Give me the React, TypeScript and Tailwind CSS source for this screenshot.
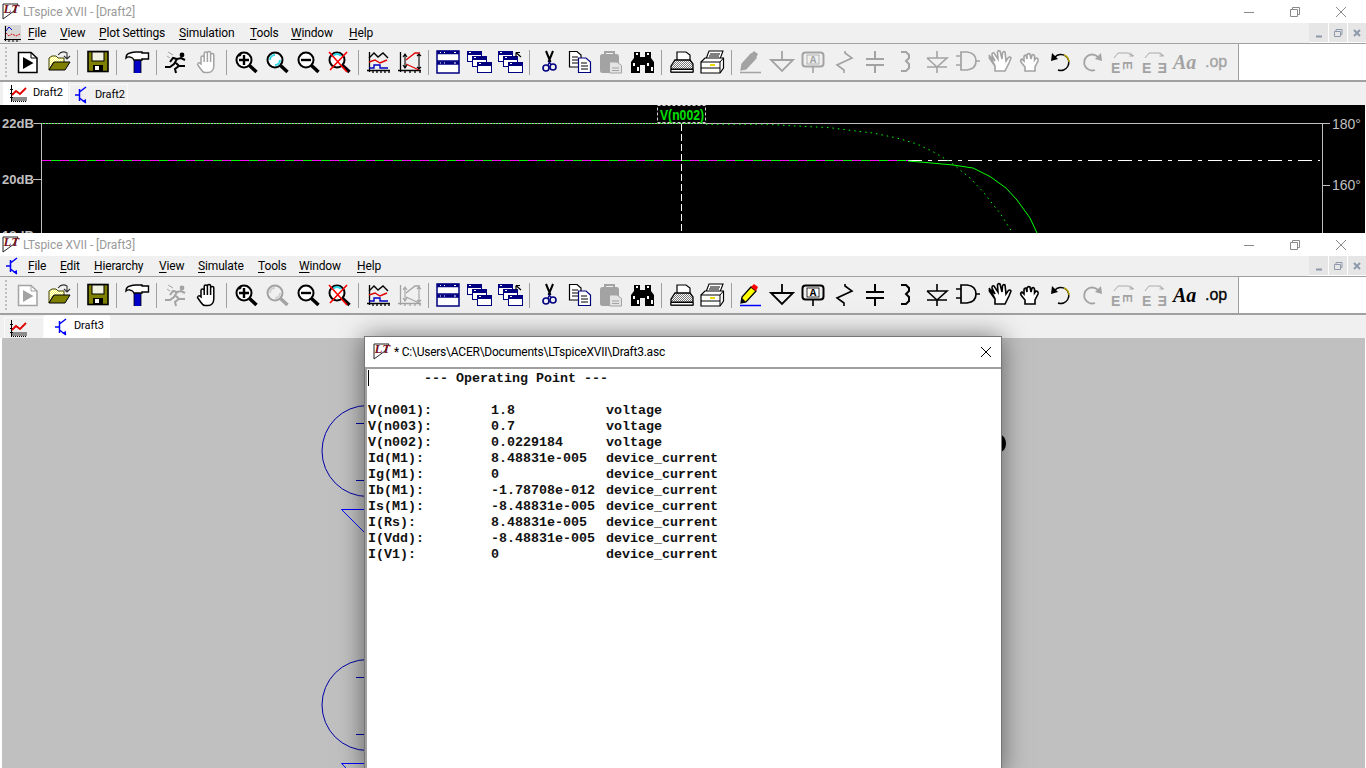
import React from "react";

type IP = { d?: boolean };
const Svg = ({ children }: { children: React.ReactNode }) => (
  <svg width="24" height="24" viewBox="0 0 24 24" fill="none" className="block overflow-visible">{children}</svg>
);
const G = "#a3a3a3";
const col = (d: boolean | undefined, c = "#000") => (d ? G : c);

const Mag = ({ d, kind }: IP & { kind?: string }) => (
  <Svg>
    <circle cx="10" cy="10" r="7.5" fill={d ? "#f0f0f0" : "#fff"} stroke={col(d)} strokeWidth="2" />
    {!kind && <path d="M5 10A5 5 0 0 1 10 5M15 10A5 5 0 0 1 10 15" stroke={d ? "#d0d0d0" : "#30d8e8"} strokeWidth="2" />}
    {kind === "x" && <path d="M6 6A5 5 0 0 1 14 6" stroke="#30d8e8" strokeWidth="2" />}
    {kind === "+" && <path d="M5 10H15M10 5V15M5 6L7 4" stroke={col(d)} strokeWidth="2.4" />}
    {kind === "-" && <path d="M5 10H15" stroke={col(d)} strokeWidth="2.4" />}
    <path d="M15.5 15.5L22.5 22" stroke={col(d)} strokeWidth="3.5" />
    {kind === "x" && <path d="M2 2L20 22M20 2L3 20" stroke="#ff0000" strokeWidth="1.6" />}
  </Svg>
);

const Hand = ({ d }: IP) => (
  <Svg>
    <path d="M6 14V7.5a1.6 1.6 0 0 1 3.2 0V3.5a1.6 1.6 0 0 1 3.2 0V3a1.6 1.6 0 0 1 3.2 0V5a1.6 1.6 0 0 1 3.2 0V16Q18.5 22.5 13 22.5H10Q8 22.5 6 19.5L2.5 14.5Q3 11.5 6 14ZM9.2 7.5V12M12.4 3.5V12M15.6 4V12" fill="#fff" stroke={col(d)} strokeWidth="1.5" />
  </Svg>
);

const Wins = ({ arrow }: { arrow?: boolean }) => {
  const w = (x: number, y: number) => (
    <g key={x}>
      <rect x={x + 0.5} y={y + 0.5} width="14" height="10" fill="#fff" stroke="#000080" />
      <rect x={x} y={y} width="15" height="4" fill="#000080" />
      <rect x={x + 2} y={y + 1} width="2" height="1" fill="#fff" />
    </g>
  );
  return (
    <Svg>
      {w(0, 1)}
      {w(5, 6)}
      {w(10, 12)}
      {arrow && <path d="M18 2.5H22M18 2.5V7M18 2.5L23 7" stroke="#000" strokeWidth="1.2" fill="none" />}
    </Svg>
  );
};

const Plot = ({ d }: IP) => (
  <Svg>
    <path d="M3.5 2V22M1 20.5H24M7 20V23M11 20V23M15 20V23M19 20V23M23 20V23" stroke={col(d)} strokeWidth="1.3" />
    <path d="M3 8L8 3L12 7L17 3L22 8" stroke={col(d)} strokeWidth="1.4" />
    <path d="M3 12L9 10L14 13L21 10" stroke={col(d, "#e00000")} strokeWidth="1.4" />
    <path d="M3 18H8V15H14V18H22" stroke={col(d, "#0000c0")} strokeWidth="1.4" />
  </Svg>
);

const TabPlot = () => (
  <svg width="17" height="17" viewBox="0 0 17 17" fill="none" className="block shrink-0">
    <rect x="2" y="12" width="15" height="4" fill="#8c8c8c" />
    <path d="M1.5 0V17M0 4.5H3M0 8.5H3M0 12.5H3" stroke="#000" />
    <path d="M2 10L6 6L10 9L16 3" stroke="#e00000" strokeWidth="1.8" />
    <path d="M3 16.5H17" stroke="#000" strokeDasharray="1 1" />
  </svg>
);

const Logo = () => (
  <svg width="17" height="18" viewBox="0 0 17 18" fill="none" className="block shrink-0 overflow-visible">
    <path d="M1 1H16L12 8L1 16Z" fill="#fff" stroke="#222" strokeWidth="1" />
    <text x="1.5" y="10" fontFamily="'Liberation Serif',serif" fontStyle="italic" fontWeight="700" fontSize="13" fill="#7a1020">LT</text>
  </svg>
);

const Transistor = ({ className }: { className?: string }) => (
  <svg width="13" height="18" viewBox="0 0 13 18" fill="none" className={className ?? "block shrink-0"}>
    <path d="M0 9H4M4.5 3V15M4.5 6L11 1M4.5 12L11 17" stroke="#0000ff" strokeWidth="1.5" />
    <path d="M7 15L11 17L11 13Z" fill="#0000ff" />
  </svg>
);

const icons: Record<string, (p: IP) => React.ReactNode> = {
  run: ({ d }) => (
    <Svg>
      <path d="M2.5 2.5H15L21 8V22.5H2.5Z" fill="#fff" stroke={col(d)} strokeWidth="1.5" />
      <path d="M15 2.5V8H21" stroke={col(d)} />
      <path d="M7 7L17.5 13L7 19Z" fill={col(d)} />
    </Svg>
  ),
  open: () => (
    <Svg>
      <defs>
        <pattern id="dy" width="2" height="2" patternUnits="userSpaceOnUse">
          <rect width="2" height="2" fill="#ffff66" />
          <rect width="1" height="1" fill="#fff" />
          <rect x="1" y="1" width="1" height="1" fill="#fff" />
        </pattern>
      </defs>
      <path d="M2 8L5 6H9L11 8H17V13H6L2 20Z" fill="url(#dy)" stroke="#404000" />
      <path d="M2 20L7 12H23L18 20Z" fill="#808000" stroke="#000" />
      <path d="M11 5Q15 0 20 3V8M17 6L20 9L23 6" stroke="#333" strokeWidth="1.1" />
    </Svg>
  ),
  save: () => (
    <Svg>
      <rect x="2" y="1.5" width="20" height="20" fill="#808000" stroke="#000" strokeWidth="1.6" />
      <rect x="6" y="2" width="12" height="9" fill="#f2f2e0" stroke="#000" />
      <rect x="7" y="15" width="10" height="6" fill="#000" />
      <rect x="9" y="16" width="4" height="4" fill="#fff" />
    </Svg>
  ),
  build: () => (
    <Svg>
      <rect x="9" y="9" width="7" height="14" fill="#0000c8" />
      <path d="M9 10V23M16 10V23" stroke="#000" strokeWidth="0.8" />
      <path d="M1 8Q1 4 5 3Q8 2 11 2H17V3H23.5V9H17V10H9Q8 7.5 5 7Q2.5 6.5 1 8Z" fill="#fff" stroke="#000" strokeWidth="1.4" />
    </Svg>
  ),
  runner: ({ d }) => (
    <Svg>
      <path d="M1 17H6L10 14L13 9L17 8L21 10M13 9L9 8L6 12M12 13L15 16L11 19L12 23M15 16L21 16" stroke={col(d)} strokeWidth="2" />
      <circle cx="18" cy="5" r="2.4" fill={col(d)} />
      <path d="M4 2L9 5M3 6L6 8" stroke={G} strokeWidth="1" />
    </Svg>
  ),
  hand: Hand,
  zin: ({ d }) => <Mag d={d} kind="+" />,
  zfit: ({ d }) => <Mag d={d} />,
  zout: ({ d }) => <Mag d={d} kind="-" />,
  zx: ({ d }) => <Mag d={d} kind="x" />,
  plot: ({ d }) => <Plot d={d} />,
  auto: ({ d }) => (
    <Svg>
      <path d="M3.5 2V22M1 20.5H24M8 20V23M13 20V23M18 20V23M23 20V23" stroke={col(d)} strokeWidth="1.3" />
      <path d="M9 10L18 3H23M9 14L22 20" stroke={col(d, "#e00000")} strokeWidth="1.3" />
      <path d="M8 5V17M6 7L8 4L10 7M6 15L8 18L10 15M22 4V19M20 6L22 4L24 6M20 17L22 19L24 17" stroke={col(d)} strokeWidth="1.1" />
    </Svg>
  ),
  tile: () => (
    <Svg>
      <rect x="1" y="1" width="22" height="22" fill="#fff" stroke="#000080" strokeWidth="1.5" />
      <path d="M1 2.5H23M1 13H23" stroke="#000080" strokeWidth="3.5" />
      <path d="M1 11H23" stroke="#000080" strokeWidth="1.5" />
      <path d="M4 2.5H5M8 2.5H9M4 13H5M8 13H9M18 2.5H20M18 13H20" stroke="#fff" strokeWidth="1" />
    </Svg>
  ),
  casc: () => <Wins />,
  casc2: () => <Wins arrow />,
  cut: () => (
    <Svg>
      <path d="M9 1L13.5 12M16 1L11.5 12" stroke="#000" strokeWidth="2" />
      <circle cx="9" cy="18" r="3" stroke="#000080" strokeWidth="1.6" />
      <circle cx="16" cy="17" r="3" stroke="#000080" strokeWidth="1.6" />
      <path d="M11 15L12.5 12L14 15" stroke="#000080" strokeWidth="1.4" />
    </Svg>
  ),
  copy: () => (
    <Svg>
      <path d="M1.5 1.5H9L13 5V17H1.5Z" fill="#fff" stroke="#000" strokeWidth="1.2" />
      <path d="M4 7H10M4 10H10M4 13H10" stroke="#000" />
      <path d="M10.5 8H18L22.5 12V22.5H10.5Z" fill="#fff" stroke="#000080" strokeWidth="1.2" />
      <path d="M13 13H19M13 16H20M13 19H20" stroke="#000" />
    </Svg>
  ),
  paste: () => (
    <Svg>
      <rect x="1" y="4" width="19" height="19" rx="2.5" fill={G} />
      <path d="M6 4V2H15V4" stroke={G} strokeWidth="2" />
      <path d="M10.5 12H18L22.5 15.5V23H10.5Z" fill="#e4e4e4" stroke={G} />
      <path d="M13 18H20M13 20.5H20" stroke={G} />
    </Svg>
  ),
  find: () => (
    <Svg>
      <rect x="4" y="2" width="6" height="9" fill="#000" />
      <rect x="15" y="2" width="6" height="9" fill="#000" />
      <path d="M1 23V12L4 8H10V23ZM24 23V12L21 8H15V23Z" fill="#000" />
      <rect x="10" y="7" width="5" height="8" fill="#000" />
      <path d="M6 3H8V5H6ZM17 3H19V5H17ZM3 13H5V16H3ZM7 17H9V21H7ZM17 13H19V16H17ZM21 17H23V21H21Z" fill="#fff" />
    </Svg>
  ),
  print: () => (
    <Svg>
      <defs>
        <pattern id="dg" width="2" height="2" patternUnits="userSpaceOnUse">
          <rect width="2" height="2" fill="#fff" />
          <rect width="1" height="1" fill="#777" />
          <rect x="1" y="1" width="1" height="1" fill="#777" />
        </pattern>
      </defs>
      <path d="M8 10V2H17L21 5V10" fill="#fff" stroke="#000" strokeWidth="1.2" />
      <path d="M2 16L6 10H21L24 14V22H2Z" fill="url(#dg)" stroke="#000" strokeWidth="1.3" />
      <path d="M2 19H24" stroke="#000" />
      <path d="M2 19.5H24V22H2Z" fill="#fff" stroke="#000" />
    </Svg>
  ),
  print2: () => (
    <Svg>
      <path d="M6 9L9 1H23L20 9Z" fill="#fff" stroke="#000" strokeWidth="1.1" />
      <path d="M10 4H20M9 6H19" stroke="#000" />
      <path d="M1 12L5 8H23.5V18L20 23H1Z" fill="#fff" stroke="#000" strokeWidth="1.2" />
      <path d="M1 12H20V23M20 12L23.5 8M1 18H20" stroke="#000" />
      <rect x="10" y="14" width="5" height="2" fill="#e8d800" />
    </Svg>
  ),
  wire: ({ d }) => (
    <Svg>
      <path d="M1 22.5H22" stroke={col(d, "#0000ff")} strokeWidth="1.5" />
      <path d="M2 20L3 14L12 4L17 8L7 19Z" fill={col(d, "#ffff00")} stroke={col(d)} strokeWidth="1.3" />
      <path d="M2 20L3 15L7 19Z" fill={col(d)} />
      <path d="M12 4L15 1L19 4L17 8Z" fill={col(d, "#ff0000")} />
    </Svg>
  ),
  ground: ({ d }) => (
    <Svg><path d="M12 1V10M1 10H23L12 21Z" stroke={col(d)} strokeWidth="1.8" /></Svg>
  ),
  label: ({ d }) => (
    <Svg>
      <rect x="1.5" y="2.5" width="21" height="14" rx="3" stroke={col(d)} strokeWidth="2" />
      <rect x="6" y="5" width="12" height="9" fill={d ? "none" : "#fff"} stroke={col(d)} strokeWidth="0.8" />
      <text x="12" y="13.2" textAnchor="middle" fontFamily="'Liberation Mono',monospace" fontWeight="700" fontSize="11" fill={col(d)}>A</text>
      <path d="M12 17V23" stroke={col(d)} strokeWidth="1.6" />
    </Svg>
  ),
  res: ({ d }) => (
    <Svg><path d="M13 1V3L20 8L5 15L12 20V23" stroke={col(d)} strokeWidth="1.6" /></Svg>
  ),
  cap: ({ d }) => (
    <Svg><path d="M12 1V9M3 9H21M3 15H21M12 15V23" stroke={col(d)} strokeWidth="2" /></Svg>
  ),
  ind: ({ d }) => (
    <Svg><path d="M7 2H12L15 5V8L12 11L15 14V18L12 21H7" stroke={col(d)} strokeWidth="2" /></Svg>
  ),
  diode: ({ d }) => (
    <Svg><path d="M12 1V8M2 8H22L12 17L2 8M2 17H22M12 17V23" stroke={col(d)} strokeWidth="1.6" /></Svg>
  ),
  gate: ({ d }) => (
    <Svg><path d="M5 2H11Q20 3 20 11Q20 19 11 20H5ZM20 11H24M0 6H5M0 15H5" stroke={col(d)} strokeWidth="1.7" /></Svg>
  ),
  grab: ({ d }) => (
    <Svg>
      <path d="M4 8L2 5M4 8L8 16V21H18L22 13L24 8Q23 6 21 8L19 11L18 2Q16 1 15.5 3L15 9L13 1Q11 0 10.5 2L11 9L7 3Q5 2 5 5L8 11L4 7Q1 6 3 9L8 16" fill="#fff" stroke={col(d)} strokeWidth="1.6" />
    </Svg>
  ),
  fist: ({ d }) => (
    <Svg>
      <path d="M7 21V17L3 12Q2 10 4 9L6 11V7Q6 5 8 5L9 9V5Q10 3 12 4L13 9L14 5Q16 4 16.5 6V10L18 8Q20.5 8 20 11L17 17V21Z" fill="#fff" stroke={col(d)} strokeWidth="1.6" />
    </Svg>
  ),
  undo: () => (
    <Svg>
      <path d="M6 7A8 8 0 1 1 9 20" stroke="#000" strokeWidth="1.4" />
      <path d="M15 5A8 8 0 0 1 20 12" stroke="#b0a000" strokeWidth="1.4" />
      <path d="M2 11L3 3L9 9Z" fill="#000" />
    </Svg>
  ),
  redo: ({ d }) => (
    <Svg>
      <path d="M18 7A8 8 0 1 0 15 20" stroke={col(d)} strokeWidth="1.8" />
      <path d="M22 11L21 3L15 9Z" fill={col(d)} />
    </Svg>
  ),
  rot: ({ d }) => (
    <Svg>
      <path d="M3 8L7 3H17L22 6M19 2.5L22.5 6H18.5" stroke={col(d)} strokeWidth="0.9" />
      <text x="0" y="22.5" fontFamily="'Liberation Sans',sans-serif" fontWeight="700" fontSize="14" fill={col(d)}>E</text>
      <text x="0" y="0" transform="translate(11.5 11) rotate(90)" fontFamily="'Liberation Sans',sans-serif" fontWeight="700" fontSize="13" fill={col(d)}>E</text>
    </Svg>
  ),
  mir: ({ d }) => (
    <Svg>
      <path d="M3 8L7 3H17L21 6M18 2.5L21.5 6H17.5" stroke={col(d)} strokeWidth="0.9" />
      <text x="0" y="22.5" fontFamily="'Liberation Sans',sans-serif" fontWeight="700" fontSize="14" fill={col(d)}>E</text>
      <text x="0" y="0" transform="translate(25 22.5) scale(-1 1)" fontFamily="'Liberation Sans',sans-serif" fontWeight="700" fontSize="14" fill={col(d)}>E</text>
    </Svg>
  ),
  aa: ({ d }) => (
    <Svg>
      <text x="0" y="19" fontFamily="'Liberation Serif',serif" fontStyle="italic" fontWeight="700" fontSize="20" fill={col(d)}>Aa</text>
    </Svg>
  ),
  op: ({ d }) => (
    <Svg>
      <text x="1" y="17" fontFamily="'Liberation Sans',sans-serif" fontSize="16" fontWeight="400" stroke={col(d)} strokeWidth="0.3" fill={col(d)}>.op</text>
    </Svg>
  ),
};

const Sep = ({ a }: { a?: boolean }) => (
  <div className="w-[8px] h-[36px] flex items-center shrink-0">
    <div className={a ? "ml-[2px] w-[1px] h-[25px] bg-[#a0a0a0]" : "ml-[3px] w-[1px] h-[25px] bg-[#a0a0a0]"} />
  </div>
);

const order: string[] = [
  "run", "open", "|a", "save", "|a", "build", "|", "runner", "hand", "|", "zin", "zfit", "zout", "zx", "|", "plot", "auto", "|",
  "tile", "casc", "casc2", "|", "cut", "copy", "paste", "find", "|", "print", "print2", "|",
  "wire", "ground", "label", "res", "cap", "ind", "diode", "gate", "grab", "fist", "undo", "redo", "rot", "mir", "aa", "op",
];

const Toolbar = ({ off }: { off: string[] }) => (
  <div className="h-[39px] shrink-0 flex flex-col bg-white">
    <div className="h-[1px] bg-[#a0a0a0]" />
    <div className="h-[36px] flex">
      <div className="w-[1239px] h-[36px] flex bg-[#f0f0f0] border-r border-[#a0a0a0]">
        <div className="w-[13px] h-[36px] shrink-0 pl-[5px] py-[3px]">
          <div className="h-[30px] w-0 border-l-2 border-dotted border-[#c0c0c0]" />
        </div>
        {order.map((k, i) => {
          if (k === "|" || k === "|a") return <Sep key={i} a={k === "|a"} />;
          const C = icons[k];
          return (
            <div key={i} className="w-[31px] h-[36px] shrink-0 flex items-center pl-[3px]">
              <C d={off.includes(k)} />
            </div>
          );
        })}
      </div>
    </div>
    <div className="h-[2px] bg-[#a0a0a0]" />
  </div>
);

const Caption = ({ title }: { title: string }) => (
  <div className="h-[23px] shrink-0 bg-white flex items-center pl-[2px] text-[12px] text-[#999999]">
    <Logo />
    <span className="ml-[4px] tracking-[-0.05px]">{title}</span>
    <div className="ml-auto flex mr-[2px]">
      <div className="w-[46px] flex justify-center"><svg width="12" height="12" viewBox="0 0 12 12" fill="none"><path d="M1 6.5H11" stroke="#8a8a8a" /></svg></div>
      <div className="w-[46px] flex justify-center"><svg width="12" height="12" viewBox="0 0 12 12" fill="none"><path d="M1.5 3.5H8.5V10.5H1.5ZM3.5 3.5V1.5H10.5V8.5H8.5" stroke="#8a8a8a" /></svg></div>
      <div className="w-[46px] flex justify-center"><svg width="12" height="12" viewBox="0 0 12 12" fill="none"><path d="M1 1L11 11M11 1L1 11" stroke="#8a8a8a" /></svg></div>
    </div>
  </div>
);

const Mdi = () => (
  <div className="ml-auto flex h-[20px] bg-white gap-[1px]">
    <div className="w-[19px] h-[19px] bg-[#e6e6e6] flex items-center justify-center"><svg width="10" height="10" viewBox="0 0 10 10"><path d="M2 8.5H8" stroke="#8e99ab" strokeWidth="2" /></svg></div>
    <div className="w-[18px] h-[19px] bg-[#e6e6e6] flex items-center justify-center"><svg width="10" height="10" viewBox="0 0 10 10" fill="none"><path d="M1.5 3.5H7.5V8.5H1.5ZM3 3.5V1.5H9V6.5H7.5" stroke="#8e99ab" /></svg></div>
    <div className="w-[18px] h-[19px] bg-[#e6e6e6] flex items-center justify-center"><svg width="10" height="10" viewBox="0 0 10 10" fill="none"><path d="M2 2L8 8M8 2L2 8" stroke="#8e99ab" strokeWidth="2" /></svg></div>
  </div>
);

const MenuItem = ({ t, w }: { t: string; w: string }) => (
  <span className={w + " block shrink-0 whitespace-pre tracking-[-0.15px]"}>
    <span className="underline underline-offset-2">{t[0]}</span>
    {t.slice(1)}
  </span>
);

const PlotPane = () => (
  <svg viewBox="0 105 1366 128" width="1366" height="128" className="block shrink-0">
    <rect x="0" y="105" width="1365" height="128" fill="#000" />
    <g fontFamily="'Liberation Sans',sans-serif" fontWeight="700" fontSize="13" fill="#c0c0c0">
      <text x="2" y="128">22dB</text>
      <text x="2" y="184">20dB</text>
      <text x="2" y="240">18dB</text>
      <text x="1332" y="129" fontWeight="400" fontSize="14">180°</text>
      <text x="1332" y="190" fontWeight="400" fontSize="14">160°</text>
    </g>
    <path d="M33.5 123.5H1330M41.5 123.5V233M1322.5 123.5V233M33 179.5H41M1322 185.5H1330" stroke="#c0c0c0" fill="none" />
    <path d="M42 123.5H705" stroke="#00ff00" strokeDasharray="1 2" />
    <path d="M42 160.5H908" stroke="#00ff00" />
    <path d="M42 160.5H908" stroke="#ff00ff" strokeDasharray="9 9" />
    <path d="M908 160.5H1320" stroke="#ffffff" strokeDasharray="14 6 4 6" />
    <path d="M681.5 124V233" stroke="#fff" strokeDasharray="7 3" />
    <polyline points="908,161 926,162.5 953,165 973,168 990,176.5 1006,188 1017,200 1030,218 1037,233" fill="none" stroke="#00ff00" />
    <polyline points="706,124.3 767,124.3 797,126 830,127.7 853,130.7 873,133 897,138 917,144 933,151.7 950,161.7 970,178 983,191.7 995,207 1000,213 1012,232" fill="none" stroke="#00ff00" strokeDasharray="1.5 4" />
    <rect x="657.5" y="105.5" width="48" height="17" fill="#000" stroke="#d0d0d0" strokeDasharray="3 2" />
    <text x="660" y="119.5" textLength="44" lengthAdjust="spacingAndGlyphs" fontFamily="'Liberation Sans',sans-serif" fontWeight="700" fontSize="14" fill="#00e000">V(n002)</text>
  </svg>
);

const rows = [
  ["V(n001):", "1.8", "voltage"],
  ["V(n003):", "0.7", "voltage"],
  ["V(n002):", "0.0229184", "voltage"],
  ["Id(M1):", "8.48831e-005", "device_current"],
  ["Ig(M1):", "0", "device_current"],
  ["Ib(M1):", "-1.78708e-012", "device_current"],
  ["Is(M1):", "-8.48831e-005", "device_current"],
  ["I(Rs):", "8.48831e-005", "device_current"],
  ["I(Vdd):", "-8.48831e-005", "device_current"],
  ["I(V1):", "0", "device_current"],
];

const Schematic = () => (
  <svg viewBox="0 338 1364 430" width="1364" height="430" className="block">
    <g fill="none" stroke="#0000a8">
      <circle cx="367.5" cy="451" r="45.5" />
      <circle cx="367.5" cy="705" r="45.5" />
      <path d="M356 423.5H366M356 480.5H366M356 677.5H366M356 734.5H366" />
    </g>
    <path d="M366 509.5H341.5L366 534M366 763.5H341.5L366 788" fill="none" stroke="#0000ff" />
    <ellipse cx="1000" cy="443.5" rx="6" ry="8.5" fill="#000" />
  </svg>
);

export default function App() {
  return (
    <div className="relative w-[1366px] h-[768px] overflow-hidden flex flex-col bg-white font-['Roboto',sans-serif] text-[12px] text-black">
      {/* Draft2 window */}
      <div className="h-[233px] shrink-0 flex flex-col">
        <Caption title="LTspice XVII - [Draft2]" />
        <div className="h-[20px] shrink-0 flex items-center bg-[#f0f0f0]">
          <div className="w-[28px] shrink-0 pl-[4px]">
            <div className="w-[17px] h-[17px] bg-[#d8d8d8]">
              <svg width="17" height="17" viewBox="0 0 17 17" fill="none" className="block">
                <path d="M1.5 1V16M0 14.5H17M5 14V17M9 14V17M13 14V17" stroke="#000" />
                <path d="M2 8L5 11L8 9L12 11L16 9" stroke="#e00000" strokeDasharray="2 1" />
                <path d="M2 6L5 2L8 5" stroke="#0000c0" />
              </svg>
            </div>
          </div>
          <MenuItem t="File" w="w-[32px]" />
          <MenuItem t="View" w="w-[39px]" />
          <MenuItem t="Plot Settings" w="w-[80px]" />
          <MenuItem t="Simulation" w="w-[71px]" />
          <MenuItem t="Tools" w="w-[41px]" />
          <MenuItem t="Window" w="w-[58px]" />
          <MenuItem t="Help" w="w-[32px]" />
          <Mdi />
        </div>
        <Toolbar off={["hand", "wire", "ground", "label", "res", "cap", "ind", "diode", "gate", "grab", "fist", "redo", "rot", "mir", "aa", "op", "paste"]} />
        <div className="h-[23px] shrink-0 flex items-end bg-[#f0f0f0] pl-[3px]">
          <div className="h-[23px] w-[65px] bg-white flex items-center pl-[7px] gap-[6px] text-[11px] tracking-[-0.1px]">
            <TabPlot />
            <span>Draft2</span>
          </div>
          <div className="h-[21px] w-[59px] ml-[1px] bg-[#f0f0f0] border border-b-0 border-[#fafafa] flex items-center pl-[5px] gap-[7px] text-[11px] tracking-[-0.1px]">
            <Transistor />
            <span>Draft2</span>
          </div>
        </div>
        <PlotPane />
      </div>

      {/* Draft3 window */}
      <div className="flex-1 flex flex-col min-h-0">
        <Caption title="LTspice XVII - [Draft3]" />
        <div className="h-[20px] shrink-0 flex items-center bg-[#f0f0f0]">
          <div className="w-[28px] shrink-0 pl-[6px]"><Transistor /></div>
          <MenuItem t="File" w="w-[32px]" />
          <MenuItem t="Edit" w="w-[34px]" />
          <MenuItem t="Hierarchy" w="w-[65px]" />
          <MenuItem t="View" w="w-[39px]" />
          <MenuItem t="Simulate" w="w-[60px]" />
          <MenuItem t="Tools" w="w-[41px]" />
          <MenuItem t="Window" w="w-[58px]" />
          <MenuItem t="Help" w="w-[32px]" />
          <Mdi />
        </div>
        <Toolbar off={["run", "runner", "zfit", "auto", "paste", "redo", "rot", "mir"]} />
        <div className="h-[23px] shrink-0 flex items-end bg-[#f0f0f0] pl-[4px]">
          <div className="h-[21px] w-[40px] border border-b-0 border-[#fafafa] pl-[5px] flex items-center">
            <TabPlot />
          </div>
          <div className="h-[23px] w-[66px] bg-white flex items-center pl-[11px] gap-[6px] text-[11px] tracking-[-0.1px]">
            <Transistor />
            <span>Draft3</span>
          </div>
        </div>
        <div className="flex-1 min-h-0 bg-[#c0c0c0] overflow-hidden ml-[2px] mr-[1px]">
          <div className="-ml-[2px]"><Schematic /></div>
        </div>
      </div>

      {/* Operating point dialog */}
      <div className="absolute left-[364px] top-[336px] w-[638px] h-[440px] bg-white border border-[#777777] shadow-[0_0_24px_rgba(0,0,0,0.5)] flex flex-col">
        <div className="h-[30px] shrink-0 flex items-center pl-[8px]">
          <Logo />
          <span className="ml-[4px] text-[12px] tracking-[-0.23px] text-black">* C:\Users\ACER\Documents\LTspiceXVII\Draft3.asc</span>
          <svg width="12" height="12" viewBox="0 0 12 12" fill="none" className="ml-auto mr-[9px]"><path d="M1 1L11 11M11 1L1 11" stroke="#000" /></svg>
        </div>
        <div className="h-[2px] shrink-0 bg-[#a0a0a0]" />
        <div className="flex-1 border-l-2 border-[#a0a0a0] pl-[1px] pt-[2px] relative font-['Liberation_Mono',monospace] font-bold text-[13.33px] leading-[16px] text-[#111]">
          <div className="absolute left-[1px] top-[1px] w-[1px] h-[16px] bg-black" />
          <div className="h-[16px] whitespace-pre">{"       --- Operating Point ---"}</div>
          <div className="h-[16px]" />
          {rows.map((r) => (
            <div key={r[0]} className="flex h-[16px] whitespace-pre">
              <span className="w-[123px] shrink-0">{r[0]}</span>
              <span className="w-[115px] shrink-0">{r[1]}</span>
              <span>{r[2]}</span>
            </div>
          ))}
        </div>
      </div>
    </div>
  );
}
